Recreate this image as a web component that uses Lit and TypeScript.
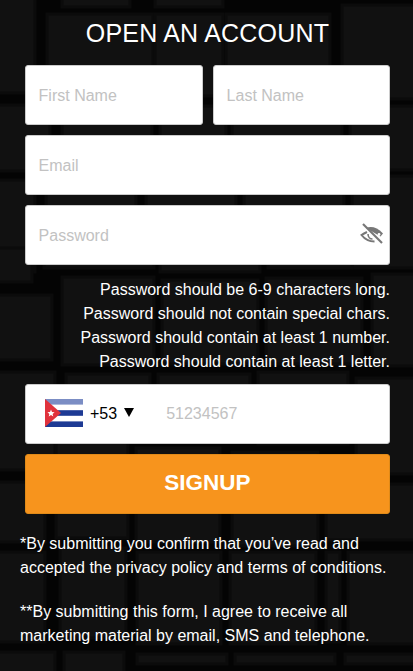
import { LitElement, html, css, svg } from "lit";
import { customElement } from "lit/decorators.js";

const bricks: [number, number, number, number][] = [
  [-5, -5, 40, 98], [62, -5, 68, 12], [47, 14, 106, 78], [155, -5, 68, 12], [155, 14, 68, 82], [226, 14, 104, 88], [342, 5, 80, 94],
  [-5, 105, 55, 66], [62, 100, 90, 64], [160, 106, 66, 62], [232, 110, 110, 60], [350, 106, 70, 64],
  [-5, 180, 40, 92], [46, 174, 90, 72], [146, 176, 90, 76], [244, 178, 100, 70], [352, 176, 70, 92],
  [-5, 248, 37, 34], [44, 254, 110, 14], [160, 258, 100, 14], [268, 254, 84, 14],
  [-5, 295, 57, 65], [62, 277, 92, 88], [162, 280, 96, 84], [266, 278, 96, 86], [372, 274, 50, 92],
  [-5, 372, 60, 98], [66, 374, 84, 60], [158, 374, 92, 66], [258, 372, 90, 72], [356, 378, 60, 96],
  [-5, 482, 50, 60], [56, 442, 72, 96], [136, 448, 84, 94], [232, 452, 86, 94], [326, 484, 90, 56],
  [-5, 552, 50, 90], [60, 548, 66, 90], [137, 552, 84, 92], [230, 552, 86, 92], [326, 552, 14, 90], [348, 552, 70, 92],
  [-5, 652, 60, 30], [64, 652, 60, 30], [137, 654, 90, 10], [235, 654, 100, 10], [345, 654, 70, 10],
];

@customElement("app-root")
export class AppRoot extends LitElement {
  static styles = css`
    :host {
      display: block;
      position: relative;
      width: 413px;
      height: 671px;
      overflow: hidden;
      background: #040404;
      color: #fff;
      font-family: "Liberation Sans", Arial, sans-serif;
      font-size: 16px;
    }
    .bg {
      position: absolute;
      inset: 0;
      width: 413px;
      height: 671px;
    }
    .content {
      position: relative;
      display: flex;
      flex-direction: column;
      box-sizing: border-box;
      height: 671px;
      padding-top: 16px;
    }
    h1 {
      margin: 0;
      height: 34px;
      padding-left: 2px;
      line-height: 34px;
      font-size: 25px;
      font-weight: 400;
      letter-spacing: 0.2px;
      text-align: center;
    }
    form {
      display: flex;
      flex-direction: column;
      gap: 10px;
      margin: 15px 23px 0 25px;
    }
    .row {
      display: grid;
      grid-template-columns: 178px 177px;
      gap: 10px;
    }
    .field {
      position: relative;
      display: flex;
      align-items: center;
      box-sizing: border-box;
      height: 60px;
      background: #fff;
      border: 1px solid #ccc;
      border-radius: 3px;
    }
    input {
      flex: 1;
      min-width: 0;
      width: 100%;
      box-sizing: border-box;
      height: 100%;
      border: 0;
      outline: 0;
      background: transparent;
      padding: 2px 12.6px 0;
      font: inherit;
      color: #222;
    }
    input::placeholder {
      color: #c2c2c2;
      opacity: 1;
    }
    .eye {
      position: absolute;
      right: 4px;
      top: 16px;
      width: 26px;
      height: 24px;
    }
    .rules {
      margin: 3px 0 0;
      text-align: right;
      line-height: 24px;
    }
    .rules div {
      white-space: nowrap;
    }
    .phone .flag {
      flex: none;
      margin: 0 0 2px 19px;
      width: 38px;
      height: 28px;
    }
    .code {
      flex: none;
      margin-left: 7px;
      color: #000;
    }
    .caret {
      flex: none;
      margin: 0 0 4px 7px;
      width: 10px;
      height: 9px;
    }
    .phone input {
      padding: 0 0 0 32px;
    }
    button {
      height: 60px;
      border: 1px solid #e08a18;
      border-radius: 3px;
      background: #f7941d;
      color: #fff;
      font: 700 22.5px "Liberation Sans", Arial, sans-serif;
      padding: 0 0 2px;
    }
    .legal {
      margin: 18px 0 0 20px;
      line-height: 24px;
      white-space: nowrap;
    }
    .legal p {
      margin: 0 0 20px;
    }
  `;

  render() {
    return html`
      <svg class="bg" viewBox="0 0 413 671" aria-hidden="true">
        ${bricks.map(
          ([x, y, w, h]) => svg`<rect x=${x} y=${y} width=${w} height=${h} fill="#111111" stroke="#0b0b0b" stroke-width="3"></rect>`
        )}
      </svg>
      <div class="content">
        <h1>OPEN AN ACCOUNT</h1>
        <form>
          <div class="row">
            <div class="field"><input placeholder="First Name" /></div>
            <div class="field"><input placeholder="Last Name" /></div>
          </div>
          <div class="field"><input placeholder="Email" /></div>
          <div class="field">
            <input placeholder="Password" />
            <svg class="eye" viewBox="0 0 26 24">
              <path d="M7 6C12 4 18 5 24 11.5L21.5 14.5Z" fill="#777"></path>
              <circle cx="20" cy="12.5" r="1.4" fill="#fff"></circle>
              <path d="M4 2L23 21" stroke="#777" stroke-width="2.2" fill="none"></path>
              <path d="M8 10C6 11 4 12 2.5 13C6 17.5 10 19.5 15.5 19.5" stroke="#777" stroke-width="2" fill="none"></path>
              <path d="M9 12C9 15 11 17 13.5 17" stroke="#777" stroke-width="1.6" fill="none"></path>
            </svg>
          </div>
          <div class="rules">
            <div>Password should be 6-9 characters long.</div>
            <div>Password should not contain special chars.</div>
            <div>Password should contain at least 1 number.</div>
            <div>Password should contain at least 1 letter.</div>
          </div>
          <div class="field phone">
            <svg class="flag" viewBox="0 0 38 28">
              <rect width="38" height="28" fill="#fff"></rect>
              <rect y="0" width="38" height="5.6" fill="#7b8dc4"></rect>
              <rect y="11.2" width="38" height="5.6" fill="#1d3a94"></rect>
              <rect y="22.4" width="38" height="5.6" fill="#1d3a94"></rect>
              <path d="M0 0L16 14L0 28Z" fill="#e0323c"></path>
              <path d="M6 10.6l1 2.5 2.6.1-2 1.7.7 2.6-2.3-1.5-2.3 1.5.7-2.6-2-1.7 2.6-.1z" fill="#fff"></path>
            </svg>
            <span class="code">+53</span>
            <svg class="caret" viewBox="0 0 10 9"><path d="M0 0H10L5 9Z" fill="#000"></path></svg>
            <input placeholder="51234567" />
          </div>
          <button type="button">SIGNUP</button>
        </form>
        <div class="legal">
          <p>*By submitting you confirm that you’ve read and<br />accepted the privacy policy and terms of conditions.</p>
          <p>**By submitting this form, I agree to receive all<br />marketing material by email, SMS and telephone.</p>
        </div>
      </div>
    `;
  }
}
